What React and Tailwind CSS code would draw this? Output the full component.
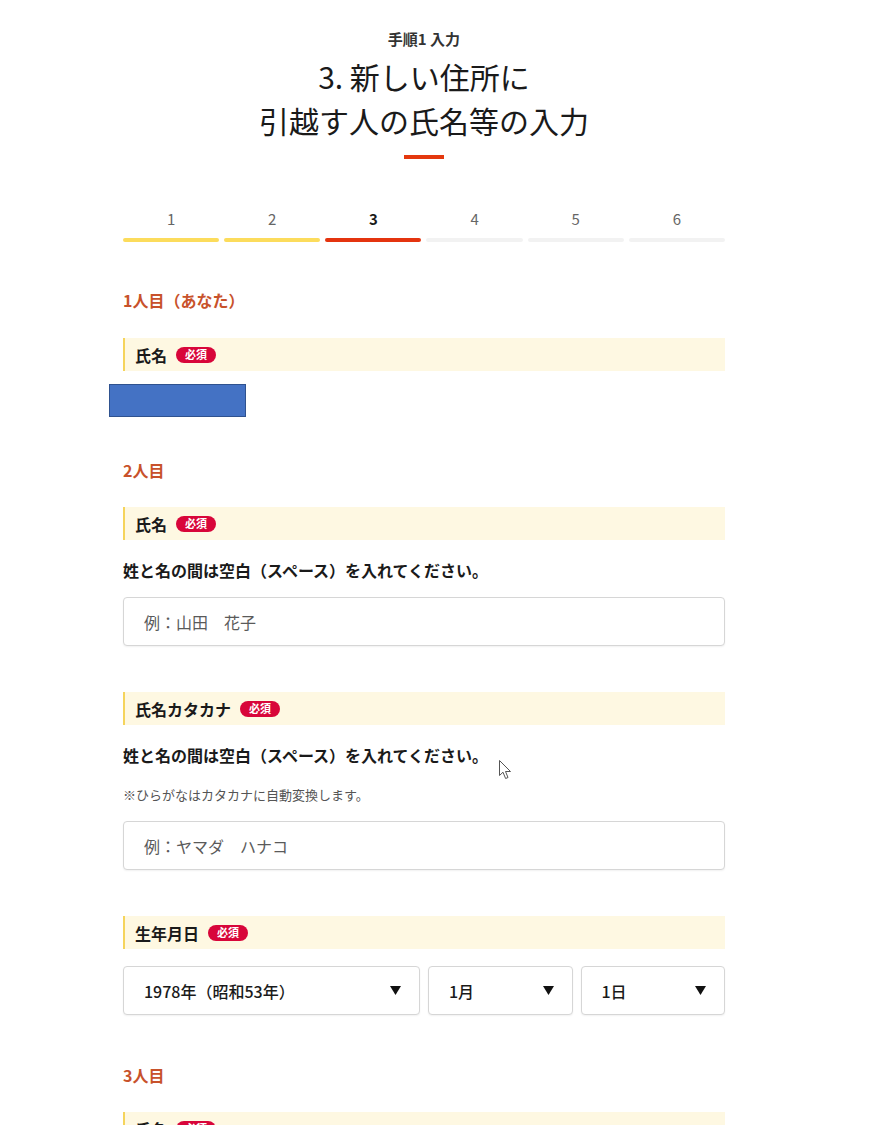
import React from "react";

const font = { fontFamily: '"Noto Sans CJK JP", "Noto Sans", sans-serif' };

function Badge() {
  return (
    <span className="ml-[9px] inline-flex h-[16px] items-center rounded-full bg-[#d8063a] px-[9px] text-[11px] font-bold leading-none text-white">
      必須
    </span>
  );
}

function LabelRow({ children }) {
  return (
    <div className="flex h-[33px] items-center border-l-2 border-[#f5d45c] bg-[#fef8e2] pl-[10px]">
      <span className="text-[16px] font-bold leading-none text-[#1a1a1a]">{children}</span>
      <Badge />
    </div>
  );
}

function SectionTitle({ children, className = "" }) {
  return (
    <div className={"text-[16px] font-bold leading-[24px] text-[#c8522b] " + className}>{children}</div>
  );
}

function TextInput({ placeholder, className = "" }) {
  return (
    <div
      className={
        "flex h-[49px] items-center rounded-[4px] border border-[#d6d6d6] bg-white pl-[20px] text-[16px] text-[#5a5a5a] shadow-[0_1px_2px_rgba(0,0,0,0.06)] " +
        className
      }
    >
      {placeholder}
    </div>
  );
}

function Select({ value }) {
  return (
    <div className="flex h-[49px] items-center justify-between rounded-[4px] border border-[#d6d6d6] bg-white pl-[20px] pr-[18px] text-[16px] font-medium text-[#1a1a1a] shadow-[0_1px_2px_rgba(0,0,0,0.06)]">
      <span>{value}</span>
      <svg width="11" height="9" viewBox="0 0 11 9">
        <path d="M0 0 H11 L5.5 9 Z" fill="#111" />
      </svg>
    </div>
  );
}

const steps = [
  { n: "1", color: "bg-[#fcdc5c]", text: "text-[#666] font-normal" },
  { n: "2", color: "bg-[#fcdc5c]", text: "text-[#666] font-normal" },
  { n: "3", color: "bg-[#e4340f]", text: "text-[#1a1a1a] font-bold" },
  { n: "4", color: "bg-[#f2f2f2]", text: "text-[#666] font-normal" },
  { n: "5", color: "bg-[#f2f2f2]", text: "text-[#666] font-normal" },
  { n: "6", color: "bg-[#f2f2f2]", text: "text-[#666] font-normal" },
];

export default function App() {
  return (
    <div className="relative min-h-[1125px] w-[870px] overflow-hidden bg-white" style={font}>
      <div className="w-[848px] pt-[29px]">
        <div className="mx-auto w-[602px]">
          <div className="text-center text-[15px] font-bold leading-[20px] text-[#333]">手順1 入力</div>
          <h1 className="mt-[5px] text-center text-[30px] font-normal leading-[44px] text-[#1a1a1a]">
            3. 新しい住所に
            <br />
            引越す人の氏名等の入力
          </h1>
          <div className="mx-auto mt-[13px] h-[4px] w-[40px] bg-[#e4380e]" />

          <div className="mt-[50px] grid grid-cols-6 gap-[5px]">
            {steps.map((s) => (
              <div key={s.n} className="flex flex-col items-center">
                <div className={"text-[15px] leading-[20px] " + s.text}>{s.n}</div>
                <div className={"mt-[9px] h-[4px] w-full rounded-full " + s.color} />
              </div>
            ))}
          </div>

          <SectionTitle className="mt-[46px]">1人目（あなた）</SectionTitle>
          <div className="mt-[26px]">
            <LabelRow>氏名</LabelRow>
          </div>
          <div className="ml-[-14px] mt-[13px] h-[33px] w-[137px] border border-[#2f528f] bg-[#4472c4]" />

          <SectionTitle className="mt-[41px]">2人目</SectionTitle>
          <div className="mt-[25px]">
            <LabelRow>氏名</LabelRow>
          </div>
          <div className="mt-[18px] text-[16px] font-bold leading-[24px] text-[#1a1a1a]">
            姓と名の間は空白（スペース）を入れてください。
          </div>
          <TextInput className="mt-[15px]" placeholder="例：山田　花子" />

          <div className="mt-[46px]">
            <LabelRow>氏名カタカナ</LabelRow>
          </div>
          <div className="mt-[18px] text-[16px] font-bold leading-[24px] text-[#1a1a1a]">
            姓と名の間は空白（スペース）を入れてください。
          </div>
          <div className="mt-[18px] text-[13px] leading-[20px] text-[#555]">
            ※ひらがなはカタカナに自動変換します。
          </div>
          <TextInput className="mt-[16px]" placeholder="例：ヤマダ　ハナコ" />

          <div className="mt-[46px]">
            <LabelRow>生年月日</LabelRow>
          </div>
          <div className="mt-[17px] grid grid-cols-[297px_1fr_1fr] gap-[8px]">
            <Select value="1978年（昭和53年）" />
            <Select value="1月" />
            <Select value="1日" />
          </div>

          <SectionTitle className="mt-[48px]">3人目</SectionTitle>
          <div className="mt-[25px]">
            <LabelRow>氏名</LabelRow>
          </div>
        </div>
      </div>

      <svg className="absolute left-[499px] top-[760px]" width="13" height="20" viewBox="0 0 13 20">
        <path
          d="M0.5 0.5 L0.5 15.5 L4 12.2 L6.6 18.5 L9 17.5 L6.5 11.5 L11.5 11.5 Z"
          fill="#fff"
          stroke="#555"
          strokeWidth="1"
          strokeLinejoin="round"
        />
      </svg>
    </div>
  );
}
